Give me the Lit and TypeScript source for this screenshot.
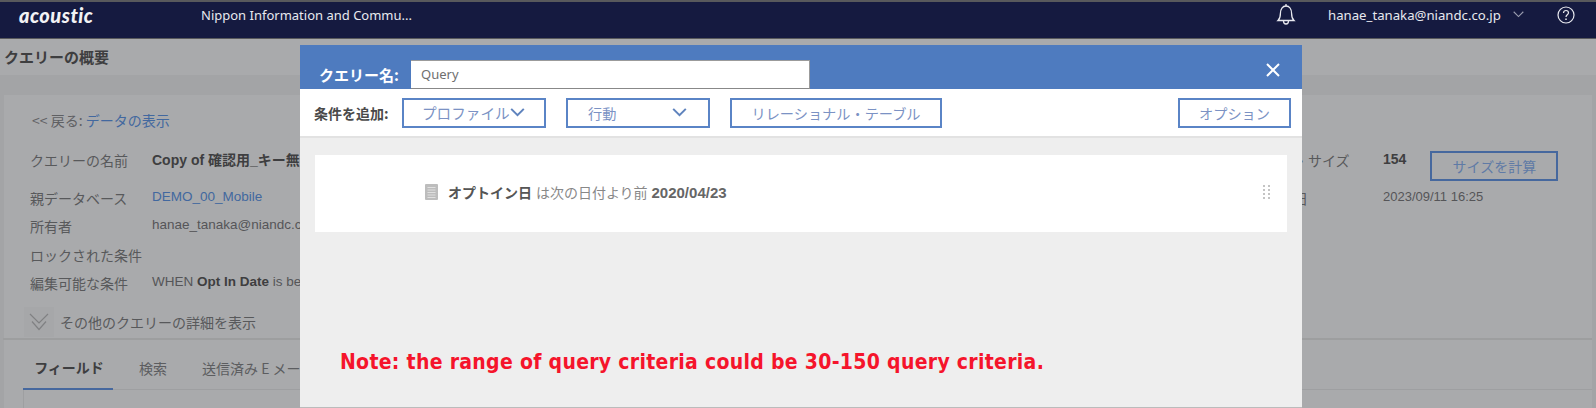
import { LitElement, html, css, svg } from "lit";
import { customElement } from "lit/decorators.js";

const chevron = (cls: string) => html`<svg class=${cls} viewBox="0 0 16 10" fill="none" stroke="currentColor" stroke-width="1.6"><path d="M1 1l7 7 7-7"/></svg>`;

@customElement("app-root")
export class AppRoot extends LitElement {
  static styles = css`
    :host { display: block; width: 1596px; height: 408px; overflow: hidden; position: relative; background: #a9aaac;
      font-family: "Liberation Sans", "Noto Sans CJK JP", sans-serif; font-size: 14px; color: #4a4a4c; }
    * { box-sizing: border-box; }
    .top { height: 39px; background: #151a40; border-top: 2px solid #58595c; border-bottom: 1px solid #58595c; display: flex; align-items: center; color: #e8e9ef; padding-bottom: 11px; }
    .logo { margin-left: 19px; width: 182px; font: italic 900 20px Lato, sans-serif; color: #f2f2f4; letter-spacing: 0.5px; }
    .acct { font: 400 13px "Noto Sans", sans-serif; }
    .bell { margin-left: auto; width: 20px; height: 23px; color: #e8e9ef; }
    .email { margin-left: 32px; width: 185px; font: 400 13.2px "Noto Sans", sans-serif; }
    .chev { width: 11px; height: 7px; color: #9a9cae; }
    .help { margin-left: 33px; margin-right: 21px; width: 18px; height: 18px; }
    .title { height: 36px; padding: 0 0 2px 4px; display: flex; align-items: center; font: 700 15px "Noto Sans CJK JP", sans-serif; color: #3e3e40; }
    .wrap { background: #a3a4a6; padding-top: 20px; height: 333px; }
    .panel { margin: 0 4px; height: 313px; padding: 15px 34px 0 26px; position: relative; background: #a9aaac; }
    .back { height: 20px; line-height: 20px; margin-left: 2px; font-family: "Noto Sans CJK JP", sans-serif; color: #5f6063; font-size: 14px; margin-bottom: 7px; }
    .back a { color: #42689f; }
    .cols { display: flex; justify-content: space-between; }
    .grid { display: grid; grid-template-columns: 122px 1fr; grid-template-rows: 46.5px repeat(4, 28.5px); align-items: center; width: 600px; }
    .grid.r { width: 320px; grid-template-columns: 145px 175px; }
    .lbl { font: 400 14px "Noto Sans CJK JP", sans-serif; color: #58595b; white-space: nowrap; }
    .val { font-size: 13px; color: #555558; white-space: nowrap; margin-top: -3px; }
    .val.wide { font-size: 13.5px; }
    .val.link { color: #42689f; }
    .val b { color: #3e3e40; font-weight: 700; }
    .big { font-size: 14px; }
    .r1 { display: flex; align-items: center; }
    .size-btn { margin: 12px 0 0 24px; width: 128px; height: 30px; flex: none; border: 2px solid #46689e; color: #5f7aa6; display: flex; align-items: center; justify-content: center; font: 400 14px "Noto Sans CJK JP", sans-serif; }
    .more { display: flex; align-items: center; gap: 6px; margin-left: -6px; height: 30px; margin-top: 9px; color: #58595b; font: 400 14px "Noto Sans CJK JP", sans-serif; }
    .more-box { width: 30px; height: 30px; background: #a6a7a9; display: flex; align-items: center; justify-content: center; color: #808183; }
    .more-box svg { width: 20px; height: 19px; }
    .tabs { position: absolute; left: -1px; right: 0; top: 243px; border-top: 2px solid #9d9e9f; height: 70px; padding: 0 0 0 20px; }
    .tab-row { display: flex; height: 50px; border-bottom: 1px solid #9e9fa1; font: 400 14px "Noto Sans CJK JP", sans-serif; color: #5c5d60; }
    .tab { display: flex; align-items: center; padding-top: 5px; height: 50px; }
    .tab.on { width: 90px; justify-content: center; font-weight: 700; color: #3e3e40; border-bottom: 2px solid #46689e; padding-left: 2px; }
    .tab.s { margin-left: 26px; }
    .tab.t { margin-left: 35px; white-space: nowrap; }
    .body-b { border-left: 1px solid #9e9fa1; height: 20px; }

    .modal { position: absolute; left: 300px; top: 45px; width: 1002px; height: 363px; background: #eee; border-bottom: 1px solid #bbb; display: flex; flex-direction: column; }
    .mh { height: 44px; background: #4e7bbf; display: flex; align-items: flex-end; padding-left: 19px; flex: none; }
    .mh .name { width: 92px; height: 29px; font: 700 15px "Noto Sans CJK JP", sans-serif; color: #fff; display: flex; align-items: center; white-space: nowrap; }
    .inp { width: 399px; height: 29px; background: #fff; border-top: 1px solid #9b9b9b; border-right: 1px solid #9b9b9b; border-bottom: 1px solid #888; display: flex; align-items: center; padding: 0 0 2px 10px; font: 400 13px "Noto Sans", sans-serif; color: #6f6f6f; }
    .x { margin-left: auto; margin-right: 22px; align-self: flex-start; margin-top: 18px; width: 14px; height: 14px; color: #fff; }
    .mt { height: 49px; background: #fff; border-bottom: 2px solid #e2e2e2; flex: none; display: flex; align-items: center; padding: 0 11px 0 14px; }
    .mt .add { width: 88px; font: 700 14px "Noto Sans CJK JP", sans-serif; color: #4a4a4a; white-space: nowrap; }
    .btn { height: 30px; border: 2px solid #5a84c6; display: flex; align-items: center; color: #7b92c4; font: 400 14.2px "Noto Sans CJK JP", sans-serif; white-space: nowrap; }
    .btn .c { width: 15px; height: 9px; color: #5f83bd; flex: none; stroke-width: 2.2; }
    .b1 { width: 144px; padding-left: 18px; margin-right: 20px; font-size: 14.6px; }
    .b2 { width: 144px; padding-left: 20px; margin-right: 20px; justify-content: space-between; padding-right: 21px; }
    .b3 { width: 212px; justify-content: center; }
    .b4 { width: 113px; margin-left: auto; justify-content: center; }
    .mc { flex: 1; padding: 17px 15px 0 15px; }
    .card { height: 77px; background: #fff; display: flex; align-items: center; padding: 0 17px 3px 110px; color: #888; font: 400 14px "Liberation Sans", "Noto Sans CJK JP", sans-serif; }
    .doc { width: 13px; height: 16px; margin-right: 10px; flex: none; }
    .card b { color: #555; font-weight: 700; }
    .card .d { font-size: 15px; color: #666; }
    .grip { margin-left: auto; width: 7px; height: 16px; }
    .note { margin: 118px 0 0 25px; font: 700 21px "DejaVu Sans Condensed", "DejaVu Sans", sans-serif; letter-spacing: 0.3px; color: #f5142b; white-space: nowrap; }
  `;

  render() {
    return html`
      <div class="top">
        <div class="logo">acoustic</div>
        <div class="acct">Nippon Information and Commu...</div>
        <svg class="bell" viewBox="0 0 20 23" fill="none" stroke="currentColor" stroke-width="1.3"><path d="M2 17.5c2-1.8 2.4-3.5 2.4-7C4.4 6 6.6 3 10 3s5.600 3 5.600 7.500c0 3.500.4 5.200 2.400 7z"/><path d="M10 1v2M7.500 18c0 2 1.100 3 2.500 3s2.500-1 2.500-3"/></svg>
        <div class="email">hanae_tanaka@niandc.co.jp</div>
        ${chevron("chev")}
        <svg class="help" viewBox="0 0 18 18" fill="none" stroke="currentColor" stroke-width="1.2"><circle cx="9" cy="9" r="8"/><path d="M6.500 7c0-1.500 1.100-2.500 2.500-2.500s2.500 1 2.500 2.300c0 2-2.500 2-2.500 4.200"/><path d="M9 12.500v1.500" stroke-width="1.500"/></svg>
      </div>
      <div class="title">クエリーの概要</div>
      <div class="wrap">
        <div class="panel">
          <div class="back">&lt;&lt; 戻る: <a>データの表示</a></div>
          <div class="cols">
            <div class="grid">
              <div class="lbl">クエリーの名前</div><div class="val big"><b>Copy of 確認用_キー無し</b></div>
              <div class="lbl">親データベース</div><div class="val wide link">DEMO_00_Mobile</div>
              <div class="lbl">所有者</div><div class="val wide">hanae_tanaka@niandc.co.jp</div>
              <div class="lbl">ロックされた条件</div><div class="val"></div>
              <div class="lbl">編集可能な条件</div><div class="val wide">WHEN <b>Opt In Date</b> is before 2020/04/23</div>
            </div>
            <div class="grid r">
              <div class="lbl">クエリー・サイズ</div>
              <div class="r1"><div class="val big"><b>154</b></div><div class="size-btn">サイズを計算</div></div>
              <div class="lbl">最終更新日</div><div class="val">2023/09/11 16:25</div>
            </div>
          </div>
          <div class="more">
            <div class="more-box"><svg viewBox="0 0 20 19" fill="none" stroke="currentColor" stroke-width="1.2"><path d="M1 2l9 9 9-9M3 9.500l7 8 7-8"/></svg></div>
            その他のクエリーの詳細を表示
          </div>
          <div class="tabs">
            <div class="tab-row">
              <div class="tab on">フィールド</div>
              <div class="tab s">検索</div>
              <div class="tab t">送信済み E メール</div>
            </div>
            <div class="body-b"></div>
          </div>
        </div>
      </div>

      <div class="modal">
        <div class="mh">
          <div class="name">クエリー名:</div>
          <div class="inp">Query</div>
          <svg class="x" viewBox="0 0 14 14" stroke="currentColor" stroke-width="2" fill="none"><path d="M1 1l12 12M13 1L1 13"/></svg>
        </div>
        <div class="mt">
          <div class="add">条件を追加:</div>
          <div class="btn b1">プロファイル${chevron("c")}</div>
          <div class="btn b2">行動${chevron("c")}</div>
          <div class="btn b3">リレーショナル・テーブル</div>
          <div class="btn b4">オプション</div>
        </div>
        <div class="mc">
          <div class="card">
            <svg class="doc" viewBox="0 0 13 16"><rect width="13" height="16" rx="1" fill="#bdbdbd"/>${[3, 5.5, 8, 10.5, 13].map((y) => svg`<rect x="2.500" y=${y} width="8" height="1" fill="#e0e0e0"/>`)}</svg>
            <span><b>オプトイン日</b> は次の日付より前 <b class="d">2020/04/23</b></span>
            <svg class="grip" viewBox="0 0 7 16" fill="#c4c4c4">${[1, 5, 9, 13].map((y) => svg`<rect x="0" y=${y} width="2" height="2"/><rect x="5" y=${y} width="2" height="2"/>`)}</svg>
          </div>
          <div class="note">Note: the range of query criteria could be 30-150 query criteria.</div>
        </div>
      </div>
    `;
  }
}
